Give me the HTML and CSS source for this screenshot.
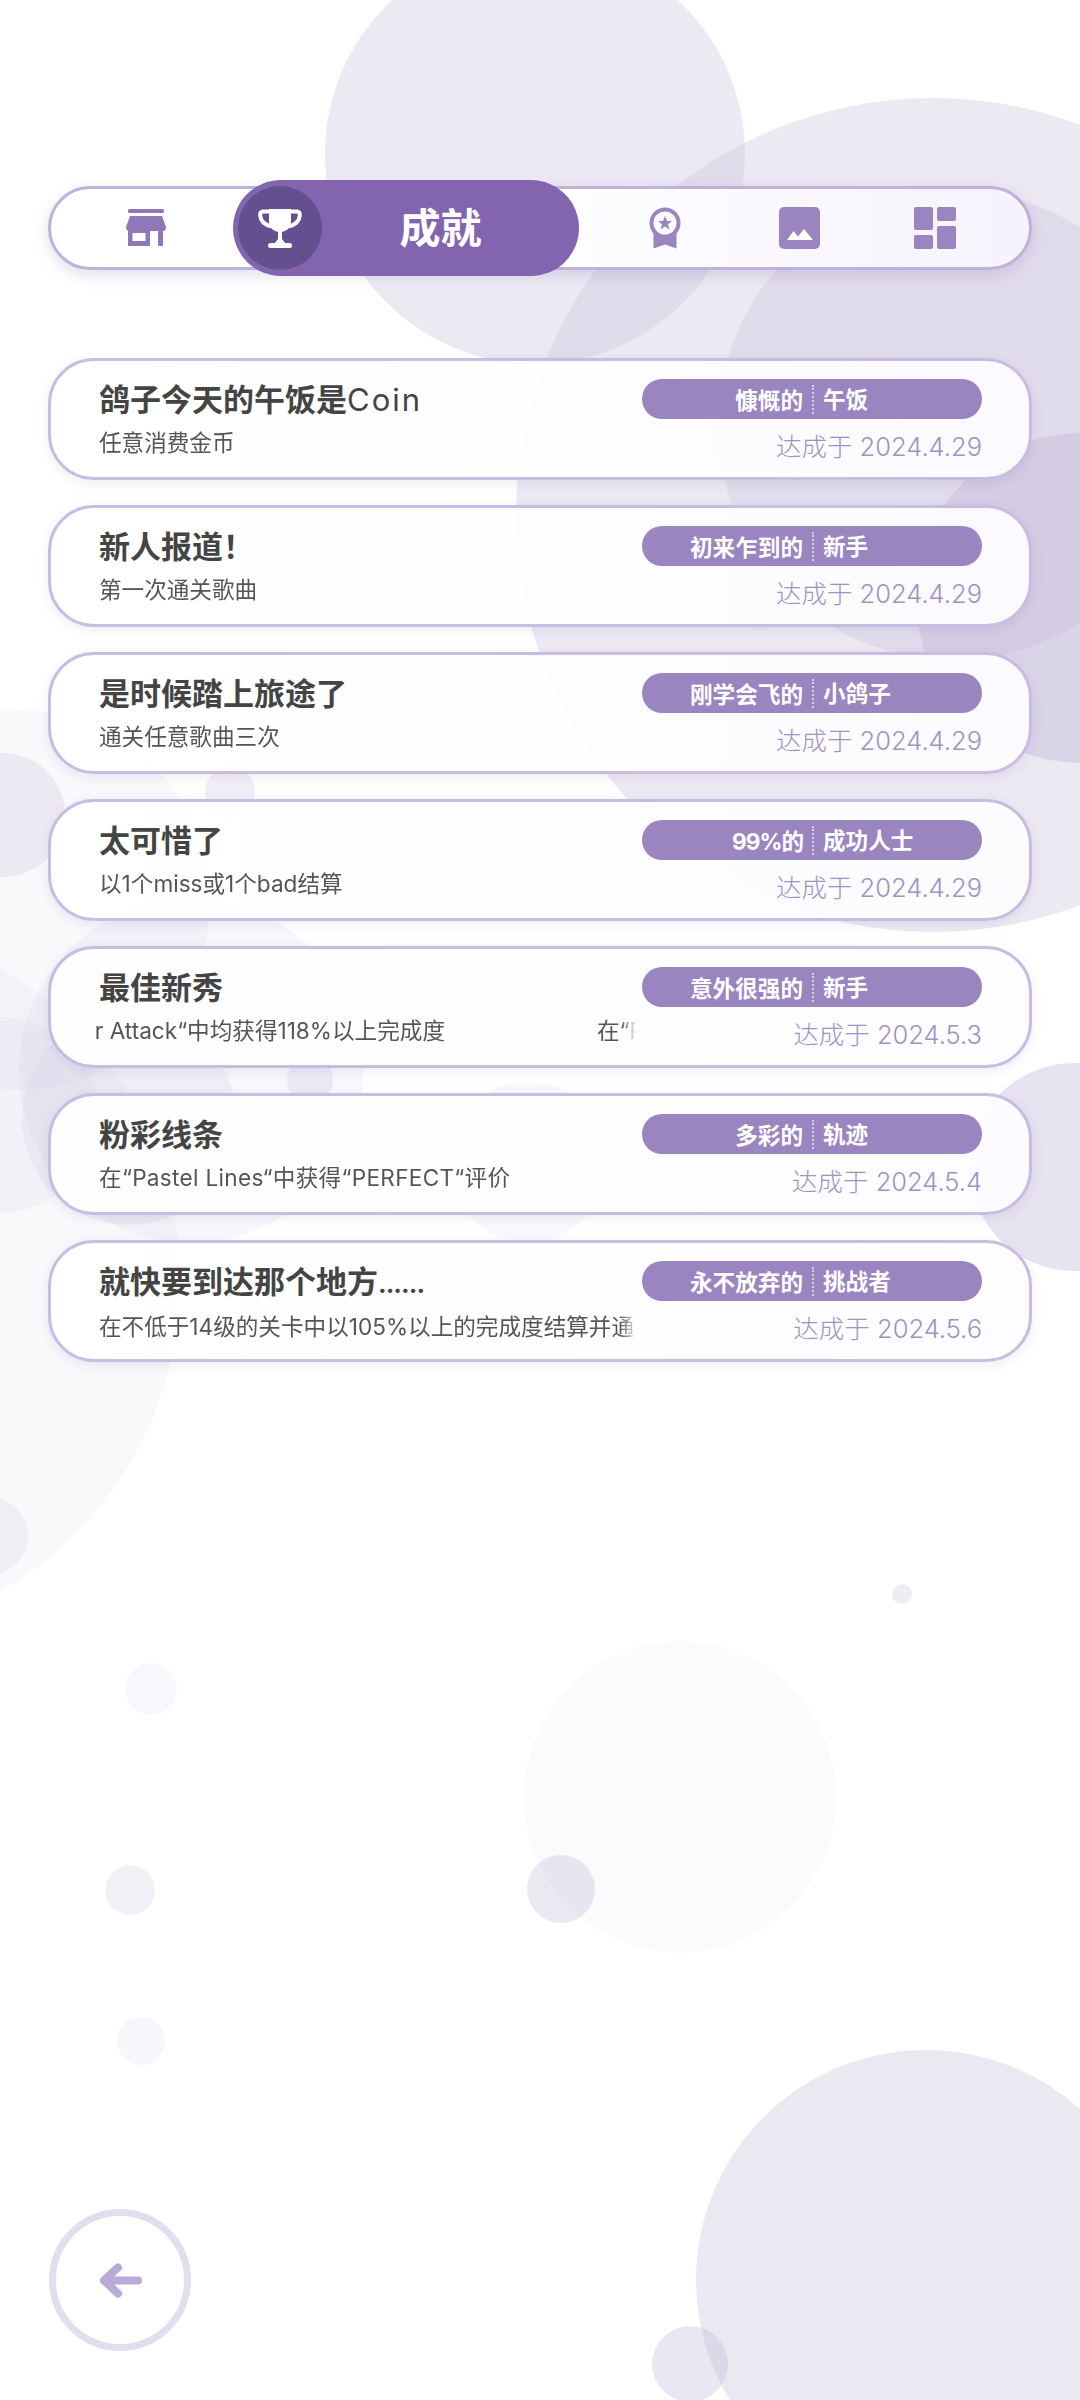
FILE: index.html
```html
<!DOCTYPE html>
<html lang="zh-CN">

<head>
    <meta charset="UTF-8">
    <meta name="viewport" content="width=device-width, initial-scale=1.0">
    <title>成就</title>
    <link rel="stylesheet" href="styles.css">
</head>

<body>
    <!-- circulos del fondo -->
    <svg class="fondo" width="1080" height="2400" viewBox="0 0 1080 2400">
        <circle cx="535" cy="154" r="210" fill="#cfc8e1" fill-opacity=".4" />
        <circle cx="933" cy="515" r="417" fill="#cfc8e1" fill-opacity=".4" />
        <circle cx="953" cy="425" r="235" fill="#cfc8e1" fill-opacity=".38" />
        <circle cx="1081" cy="598" r="165" fill="#b9aed4" fill-opacity=".35" />
        <circle cx="760" cy="612" r="18" fill="#b9aed4" fill-opacity=".15" />
        <circle cx="-180" cy="1280" r="360" fill="#cfc8e1" fill-opacity=".13" />
        <circle cx="20" cy="900" r="190" fill="#cfc8e1" fill-opacity=".13" />
        <circle cx="3" cy="815" r="62" fill="#cfc8e1" fill-opacity=".3" />
        <circle cx="230" cy="792" r="25" fill="#cfc8e1" fill-opacity=".3" />
        <circle cx="191" cy="1071" r="172" fill="#cfc8e1" fill-opacity=".14" />
        <circle cx="129" cy="1118" r="107" fill="#cfc8e1" fill-opacity=".2" />
        <circle cx="0" cy="1115" r="98" fill="#cfc8e1" fill-opacity=".14" />
        <circle cx="310" cy="1080" r="23" fill="#cfc8e1" fill-opacity=".3" />
        <circle cx="-11" cy="1536" r="39" fill="#cfc8e1" fill-opacity=".2" />
        <circle cx="1074" cy="1167" r="104" fill="#cfc8e1" fill-opacity=".5" />
        <circle cx="597" cy="987" r="36" fill="#cfc8e1" fill-opacity=".08" />
        <circle cx="528" cy="1162" r="80" fill="#cfc8e1" fill-opacity=".12" />
        <circle cx="902" cy="1594" r="10" fill="#cfc8e1" fill-opacity=".35" />
        <circle cx="680" cy="1797" r="156" fill="#cfc8e1" fill-opacity=".09" />
        <circle cx="561" cy="1889" r="34" fill="#cfc8e1" fill-opacity=".42" />
        <circle cx="151" cy="1689" r="26" fill="#cfc8e1" fill-opacity=".14" />
        <circle cx="130" cy="1890" r="25" fill="#cfc8e1" fill-opacity=".28" />
        <circle cx="141" cy="2041" r="24" fill="#cfc8e1" fill-opacity=".17" />
        <circle cx="926" cy="2280" r="230" fill="#cfc8e1" fill-opacity=".42" />
        <circle cx="690" cy="2364" r="38" fill="#b9aed4" fill-opacity=".3" />
    </svg>

    <div class="pagina">

        <nav class="menu">
            <div class="menuItem primero">
                <svg width="42" height="38" viewBox="0 0 42 38" fill="#9078b8">
                    <rect x="3" y="0" width="36" height="4" rx="1.5" />
                    <path d="M5 7H37L41 18Q41 22 38 22H4Q1 22 1 18Z" />
                    <path fill-rule="evenodd" d="M3 22H25V37H3ZM7.5 24V32H20.5V24Z" />
                    <rect x="33" y="22" width="5" height="15" rx="1" />
                </svg>
            </div>
            <div class="menuActivo">
                <div class="circuloActivo">
                    <svg width="44" height="41" viewBox="0 0 44 41" fill="#fff">
                        <path d="M11 1H33V13C33 20 28 24 22 24C16 24 11 20 11 13Z" />
                        <path d="M12 3.5H5Q2 3.5 2.2 7.5C2.7 13 6 17 14 18.5M32 3.5H39Q42 3.5 41.8 7.5C41.3 13 38 17 30 18.5" fill="none" stroke="#fff" stroke-width="4" />
                        <path d="M20 23H24V31L27 35H17L20 31Z" />
                        <rect x="10" y="35" width="24" height="5" rx="2.5" />
                    </svg>
                </div>
                <span class="textoActivo">成就</span>
            </div>
            <div class="menuItem despues">
                <svg width="32" height="42" viewBox="0 0 32 42" fill="#9b85c0">
                    <path d="M4.5 25V41.5L16 37.5L27.5 41.5V25C23 31 9 31 4.5 25Z" />
                    <circle cx="16" cy="16" r="13.5" fill="#fbfafe" stroke="#9b85c0" stroke-width="4" />
                    <path d="M16 9L18 14H23L19 17.2L20.5 22.5L16 19.4L11.5 22.5L13 17.2L9 14H14Z" />
                </svg>
            </div>
            <div class="menuItem">
                <svg width="41" height="42" viewBox="0 0 41 42">
                    <rect width="41" height="42" rx="5" fill="#9b85c0" />
                    <path d="M8 33L14.5 24L19 29.5L25 22L34 33Z" fill="#fff" />
                </svg>
            </div>
            <div class="menuItem">
                <svg width="42" height="42" viewBox="0 0 42 42" fill="#9b85c0">
                    <rect x="0" y="0" width="19" height="23" rx="2" />
                    <rect x="23" y="0" width="19" height="14" rx="2" />
                    <rect x="0" y="28" width="19" height="14" rx="2" />
                    <rect x="23" y="19" width="19" height="23" rx="2" />
                </svg>
            </div>
        </nav>

        <div class="lista">

            <div class="logro">
                <div class="datos">
                    <h3 class="titulo">鸽子今天的午饭是<span class="latino">Coin</span></h3>
                    <div class="desc"><span>任意消费金币</span></div>
                </div>
                <div class="lado">
                    <div class="insignia"><span class="adj">慷慨的</span><span class="nom">午饭</span></div>
                    <div class="fecha">达成于 2024.4.29</div>
                </div>
            </div>

            <div class="logro">
                <div class="datos">
                    <h3 class="titulo">新人报道！</h3>
                    <div class="desc"><span>第一次通关歌曲</span></div>
                </div>
                <div class="lado">
                    <div class="insignia"><span class="adj">初来乍到的</span><span class="nom">新手</span></div>
                    <div class="fecha">达成于 2024.4.29</div>
                </div>
            </div>

            <div class="logro">
                <div class="datos">
                    <h3 class="titulo">是时候踏上旅途了</h3>
                    <div class="desc"><span>通关任意歌曲三次</span></div>
                </div>
                <div class="lado">
                    <div class="insignia"><span class="adj">刚学会飞的</span><span class="nom">小鸽子</span></div>
                    <div class="fecha">达成于 2024.4.29</div>
                </div>
            </div>

            <div class="logro">
                <div class="datos">
                    <h3 class="titulo">太可惜了</h3>
                    <div class="desc"><span>以1个miss或1个bad结算</span></div>
                </div>
                <div class="lado">
                    <div class="insignia"><span class="adj adjNum">99%的</span><span class="nom">成功人士</span></div>
                    <div class="fecha">达成于 2024.4.29</div>
                </div>
            </div>

            <div class="logro">
                <div class="datos">
                    <h3 class="titulo">最佳新秀</h3>
                    <div class="desc desplazado"><span class="cola">r Attack“中均获得118%以上完成度</span><span class="inicio">在“P</span></div>
                </div>
                <div class="lado">
                    <div class="insignia"><span class="adj">意外很强的</span><span class="nom">新手</span></div>
                    <div class="fecha">达成于 2024.5.3</div>
                </div>
            </div>

            <div class="logro">
                <div class="datos">
                    <h3 class="titulo">粉彩线条</h3>
                    <div class="desc"><span class="ancho">在“Pastel Lines“中获得“PERFECT“评价</span></div>
                </div>
                <div class="lado">
                    <div class="insignia"><span class="adj">多彩的</span><span class="nom">轨迹</span></div>
                    <div class="fecha">达成于 2024.5.4</div>
                </div>
            </div>

            <div class="logro">
                <div class="datos">
                    <h3 class="titulo">就快要到达那个地方<span class="puntos">......</span></h3>
                    <div class="desc"><span>在不低于14级的关卡中以105%以上的完成度结算并通</span></div>
                </div>
                <div class="lado">
                    <div class="insignia"><span class="adj">永不放弃的</span><span class="nom">挑战者</span></div>
                    <div class="fecha">达成于 2024.5.6</div>
                </div>
            </div>

        </div>

        <div class="volver">
            <svg width="43" height="35" viewBox="0 0 43 35" fill="none" stroke="#b9aad8" stroke-width="8" stroke-linecap="round" stroke-linejoin="round">
                <path d="M39 17.5H6" />
                <path d="M19 4.5L5 17.5L19 30.5" />
            </svg>
        </div>

    </div>
</body>

</html>
```

FILE: styles.css
```css
body {
    margin: 0;
    background-color: #fff;
    font-family: Inter, "Noto Sans CJK SC", sans-serif;
    overflow: hidden;
}

.fondo {
    position: absolute;
    top: 0;
    left: 0;
}

.pagina {
    position: relative;
    height: 2400px;
    padding: 186px 48px 49px 48px;
    box-sizing: border-box;
    display: flex;
    flex-direction: column;
}

/* menu de arriba */

.menu {
    display: flex;
    align-items: center;
    height: 84px;
    box-sizing: border-box;
    border: solid 3px #bfb2da;
    border-radius: 42px;
    background: linear-gradient(90deg, #fff 0%, #fff 40%, #f6f3fc 100%);
    box-shadow: 0 5px 16px rgba(110, 90, 160, .2);
}

.menuItem {
    width: 135px;
    display: flex;
    justify-content: center;
    flex-shrink: 0;
}

.primero {
    margin-left: 27px;
}

.despues {
    margin-left: 18px;
}

.menuActivo {
    width: 346px;
    height: 96px;
    margin-left: 20px;
    padding-left: 5px;
    box-sizing: border-box;
    flex-shrink: 0;
    display: flex;
    align-items: center;
    background-color: #8265ae;
    border-radius: 48px;
}

.circuloActivo {
    width: 84px;
    height: 84px;
    border-radius: 50%;
    background-color: #64508f;
    display: flex;
    align-items: center;
    justify-content: center;
    flex-shrink: 0;
}

.textoActivo {
    flex: 1;
    padding-right: 20px;
    text-align: center;
    color: #fff;
    font-size: 41px;
    font-weight: 700;
    line-height: 84px;
}

/* lista de logros */

.lista {
    margin-top: 88px;
    display: flex;
    flex-direction: column;
    gap: 25px;
}

.logro {
    height: 122px;
    box-sizing: border-box;
    display: flex;
    justify-content: space-between;
    border: solid 3px #c9bce2;
    border-radius: 46px;
    background: linear-gradient(90deg, rgba(255, 255, 255, .96), rgba(253, 252, 255, .94));
    box-shadow: 0 3px 12px rgba(110, 90, 160, .12);
}

.datos {
    width: 550px;
    margin-left: 36px;
}

.titulo {
    margin: 20px 0 0 12px;
    color: #444;
    font-size: 31px;
    font-weight: 700;
    line-height: 38px;
    white-space: nowrap;
}

.latino {
    font-weight: 400;
    letter-spacing: 2px;
}

.puntos {
    font-size: 26px;
    letter-spacing: -1px;
}

.desc {
    margin-top: 8px;
    height: 32px;
    padding-left: 12px;
    display: flex;
    overflow: hidden;
    color: #555;
    font-size: 22.6px;
    line-height: 32px;
    white-space: nowrap;
    -webkit-mask-image: linear-gradient(90deg, #000 97%, transparent);
    mask-image: linear-gradient(90deg, #000 97%, transparent);
}

.ancho {
    letter-spacing: .3px;
}

.desplazado {
    padding-left: 0;
}

.cola {
    width: 358px;
    display: flex;
    justify-content: flex-end;
    flex-shrink: 0;
}

.inicio {
    margin-left: 152px;
}

.lado {
    width: 340px;
    margin-right: 47px;
    padding-top: 18px;
}

.insignia {
    height: 40px;
    display: grid;
    grid-template-columns: 1fr 1fr;
    align-items: center;
    border-radius: 20px;
    background-color: #9b85c0;
    color: #fff;
    font-size: 22.6px;
    font-weight: 700;
    white-space: nowrap;
}

.adj {
    padding-right: 9px;
    text-align: right;
}

.adjNum {
    letter-spacing: -1px;
}

.nom {
    padding-left: 9px;
    border-left: dotted 2px rgba(255, 255, 255, .6);
    line-height: 29px;
}

.fecha {
    margin-top: 10px;
    color: #a191c5;
    font-size: 25.5px;
    font-weight: 300;
    line-height: 36px;
    text-align: right;
    white-space: nowrap;
}

/* boton de volver */

.volver {
    width: 142px;
    height: 142px;
    margin-top: auto;
    margin-left: 1px;
    box-sizing: border-box;
    border: solid 7px #e2deef;
    border-radius: 50%;
    background-color: #fff;
    display: flex;
    align-items: center;
    justify-content: center;
}
```
